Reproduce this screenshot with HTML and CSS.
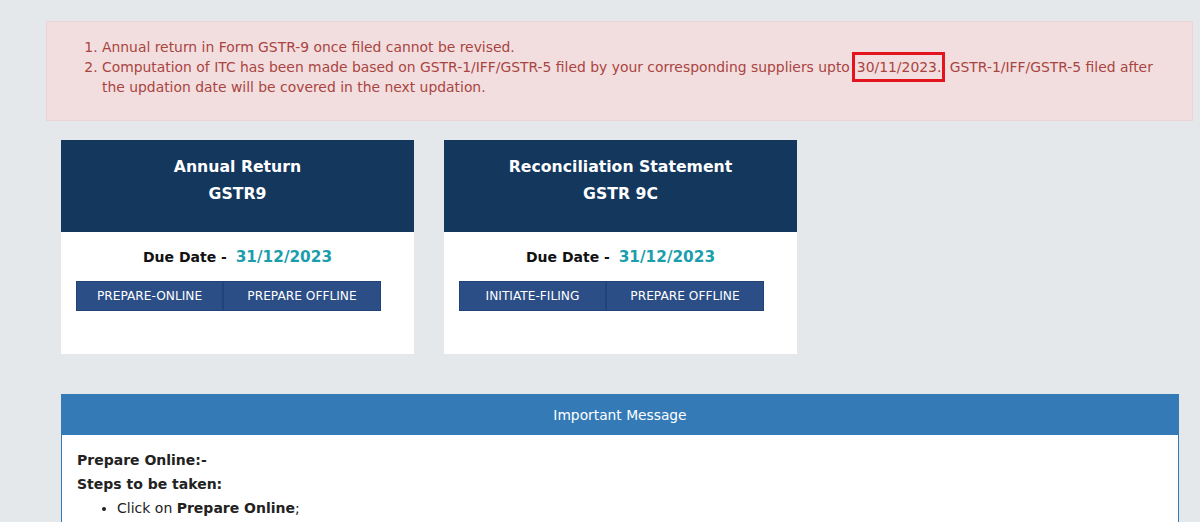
FILE: index.html
```html
<!DOCTYPE html>
<html>
<head>
<meta charset="utf-8">
<link rel="stylesheet" href="styles.css">
</head>
<body>
<div class="page">
  <div class="alert">
    <ol class="notes">
      <li>Annual return in Form GSTR-9 once filed cannot be revised.</li>
      <li>Computation of ITC has been made based on GSTR-1/IFF/GSTR-5 filed by your corresponding suppliers upto<span class="mark">30/11/2023.</span> GSTR-1/IFF/GSTR-5 filed after the updation date will be covered in the next updation.</li>
    </ol>
  </div>
  <div class="inner">
    <div class="cards">
      <div class="card">
        <div class="card-head">
          <div>Annual Return</div>
          <div>GSTR9</div>
        </div>
        <div class="card-body">
          <p class="due">Due Date - <span class="date">31/12/2023</span></p>
          <div class="btns">
            <button class="btn b1">PREPARE-ONLINE</button><button class="btn b2">PREPARE OFFLINE</button>
          </div>
        </div>
      </div>
      <div class="card">
        <div class="card-head">
          <div>Reconciliation Statement</div>
          <div>GSTR 9C</div>
        </div>
        <div class="card-body">
          <p class="due">Due Date - <span class="date">31/12/2023</span></p>
          <div class="btns">
            <button class="btn b1">INITIATE-FILING</button><button class="btn b2">PREPARE OFFLINE</button>
          </div>
        </div>
      </div>
    </div>
    <div class="panel">
      <div class="panel-head">Important Message</div>
      <div class="panel-body">
        <p class="strong">Prepare Online:-</p>
        <p class="strong">Steps to be taken:</p>
        <ul class="steps">
          <li>Click on <b>Prepare Online</b>;</li>
        </ul>
      </div>
    </div>
  </div>
</div>
</body>
</html>
```

FILE: styles.css
```css
html, body {
  margin: 0;
  padding: 0;
  background: #e4e8eb;
  font-family: "DejaVu Sans", Verdana, sans-serif;
  overflow: hidden;
}
.page {
  padding: 21px 7px 0 46px;
}
.alert {
  background: #f2dede;
  border: 1px solid #ebd3d6;
  color: #a94442;
  font-size: 13.9px;
  line-height: 20px;
  padding: 15px 20px 23px 0;
}
.notes {
  margin: 0;
  padding-left: 55px;
}
.mark {
  position: relative;
  padding: 0 1px 0 2px;
  margin-left: 5px;
  margin-right: 3px;
}
.mark::after {
  content: "";
  position: absolute;
  left: -3px;
  right: -3px;
  top: -7px;
  bottom: -7px;
  border: 3px solid #e3141d;
  pointer-events: none;
}
.inner {
  padding: 19px 14px 0 15px;
}
.cards {
  display: flex;
  gap: 30px;
}
.card {
  width: 353px;
  background: #fff;
}
.card-head {
  background: #14375d;
  color: #fff;
  font-weight: bold;
  font-size: 15.7px;
  line-height: 27px;
  text-align: center;
  height: 92px;
  padding-top: 13px;
  box-sizing: border-box;
}
.card-body {
  height: 122px;
  padding: 13px 15px 0;
  box-sizing: border-box;
}
.due {
  margin: 0 0 12px;
  text-align: center;
  font-weight: bold;
  font-size: 14px;
  line-height: 24px;
  color: #111;
}
.date {
  color: #1a9eab;
  font-size: 15.3px;
  margin-left: 4px;
}
.btns {
  display: flex;
}
.btn {
  background: #2c4e86;
  color: #fff;
  border: 1px solid #22427a;
  font-family: inherit;
  font-size: 12.2px;
  height: 30px;
  padding: 0;
  margin: 0;
}
.b1 { width: 147px; }
.b2 { width: 158px; }
.panel {
  margin-top: 40px;
  background: #fff;
  border: 1px solid #337ab7;
  border-bottom: none;
  height: 200px;
}
.panel-head {
  background: #337ab7;
  color: #fff;
  font-size: 13.8px;
  height: 40px;
  line-height: 40px;
  text-align: center;
}
.panel-body {
  padding: 13px 15px;
  font-size: 14px;
  color: #222;
  line-height: 24px;
}
.strong {
  margin: 0;
  font-weight: bold;
}
.steps {
  margin: 0;
  padding-left: 40px;
}
```
